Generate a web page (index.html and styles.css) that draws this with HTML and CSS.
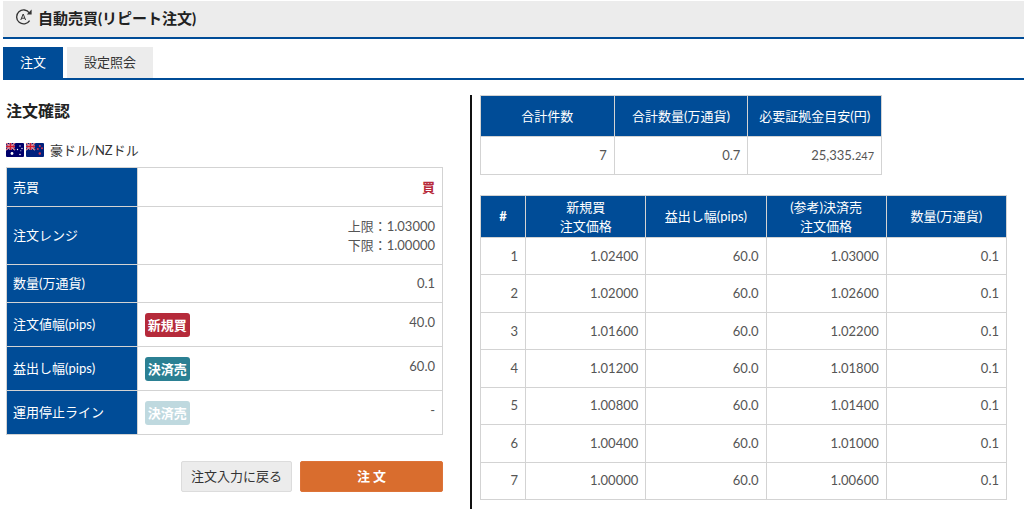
FILE: index.html
```html
<!DOCTYPE html>
<html lang="ja">
<head>
<meta charset="utf-8">
<meta name="viewport" content="width=device-width, initial-scale=1">
<title>自動売買(リピート注文)</title>
<link rel="stylesheet" href="styles.css">
</head>
<body>
<header class="page-header">
  <svg class="header-icon" viewBox="0 0 18 18" aria-hidden="true">
    <path d="M14.4 5A7 7 0 1 0 14.6 12.6" fill="none" stroke="currentColor" stroke-width="1.3"/>
    <path d="M16.6 1.6V6.4H11.8Z" fill="currentColor"/>
    <path d="M5.8 12 8.2 6 10.6 12M6.6 10.2H9.8" fill="none" stroke="currentColor" stroke-width="1"/>
  </svg>
  <h1 class="page-title">自動売買(リピート注文)</h1>
</header>
<nav class="tabs">
  <button type="button" class="tab tab-active">注文</button>
  <button type="button" class="tab">設定照会</button>
</nav>
<main class="content">
  <section class="confirm">
    <h2 class="section-title">注文確認</h2>
    <p class="pair">
      <svg class="flag" viewBox="0 0 18 14" aria-hidden="true">
        <rect width="18" height="14" rx="1" fill="#00006b"/>
        <path d="M0 0 9 7M9 0 0 7" stroke="#fff" stroke-width="1.2"/>
        <path d="M0 0 9 7M9 0 0 7" stroke="#d22" stroke-width="0.8"/>
        <path d="M4.5 0V7M0 3.5H9" stroke="#f3c9d4" stroke-width="2.2"/>
        <path d="M4.5 0V7M0 3.5H9" stroke="#d51a2c" stroke-width="1.5"/>
        <g fill="#fff"><circle cx="6" cy="10.5" r="1.4"/><circle cx="14" cy="3" r=".7"/><circle cx="11.5" cy="6.5" r=".7"/><circle cx="16" cy="5.5" r=".7"/><circle cx="14" cy="11.5" r=".8"/><circle cx="14.8" cy="7.8" r=".5"/></g>
      </svg>
      <svg class="flag" viewBox="0 0 18 14" aria-hidden="true">
        <rect width="18" height="14" rx="1" fill="#00207d"/>
        <path d="M0 0 9 7M9 0 0 7" stroke="#fff" stroke-width="1.2"/>
        <path d="M0 0 9 7M9 0 0 7" stroke="#d22" stroke-width="0.8"/>
        <path d="M4.5 0V7M0 3.5H9" stroke="#f3c9d4" stroke-width="2.2"/>
        <path d="M4.5 0V7M0 3.5H9" stroke="#d51a2c" stroke-width="1.5"/>
        <g fill="#d8354c"><circle cx="13.8" cy="3" r="1"/><circle cx="11.8" cy="6" r="1"/><circle cx="16" cy="5.3" r="1"/><circle cx="13.8" cy="10.5" r="1.2"/></g>
      </svg>
      <span class="pair-name">豪ドル/NZドル</span>
    </p>
    <table class="grid order">
      <colgroup><col class="col-label"><col class="col-badge"><col></colgroup>
      <tbody>
        <tr class="row-first"><th scope="row">売買</th><td colspan="2" class="buy">買</td></tr>
        <tr class="row-range"><th scope="row">注文レンジ</th><td colspan="2">上限：1.03000<br>下限：1.00000</td></tr>
        <tr class="row-short"><th scope="row">数量(万通貨)</th><td colspan="2">0.1</td></tr>
        <tr class="row-tall"><th scope="row">注文値幅(pips)</th><td class="badge-cell"><span class="badge badge-buy">新規買</span></td><td class="value">40.0</td></tr>
        <tr class="row-tall"><th scope="row">益出し幅(pips)</th><td class="badge-cell"><span class="badge badge-sell">決済売</span></td><td class="value">60.0</td></tr>
        <tr class="row-tall"><th scope="row">運用停止ライン</th><td class="badge-cell"><span class="badge badge-off">決済売</span></td><td class="value">-</td></tr>
      </tbody>
    </table>
    <div class="actions">
      <button type="button" class="btn btn-back">注文入力に戻る</button>
      <button type="button" class="btn btn-order">注 文</button>
    </div>
  </section>
  <section class="details">
    <table class="grid summary">
      <thead><tr><th scope="col">合計件数</th><th scope="col">合計数量(万通貨)</th><th scope="col">必要証拠金目安(円)</th></tr></thead>
      <tbody><tr><td>7</td><td>0.7</td><td>25,335.<small class="decimals">247</small></td></tr></tbody>
    </table>
    <table class="grid lines">
      <colgroup><col class="col-no"><col><col><col><col></colgroup>
      <thead><tr><th scope="col" class="no">#</th><th scope="col">新規買<br>注文価格</th><th scope="col">益出し幅(pips)</th><th scope="col">(参考)決済売<br>注文価格</th><th scope="col">数量(万通貨)</th></tr></thead>
      <tbody>
        <tr><td>1</td><td>1.02400</td><td>60.0</td><td>1.03000</td><td>0.1</td></tr>
        <tr><td>2</td><td>1.02000</td><td>60.0</td><td>1.02600</td><td>0.1</td></tr>
        <tr><td>3</td><td>1.01600</td><td>60.0</td><td>1.02200</td><td>0.1</td></tr>
        <tr><td>4</td><td>1.01200</td><td>60.0</td><td>1.01800</td><td>0.1</td></tr>
        <tr><td>5</td><td>1.00800</td><td>60.0</td><td>1.01400</td><td>0.1</td></tr>
        <tr><td>6</td><td>1.00400</td><td>60.0</td><td>1.01000</td><td>0.1</td></tr>
        <tr><td>7</td><td>1.00000</td><td>60.0</td><td>1.00600</td><td>0.1</td></tr>
      </tbody>
    </table>
  </section>
</main>
</body>
</html>
```
FILE: styles.css
```css
:root {
  --blue: #004c97;
  --line: #d3d3d3;
  --gray: #ececec;
}

* {
  box-sizing: border-box;
}

body {
  margin: 0;
  min-height: 100vh;
  display: flex;
  flex-direction: column;
  background: #fff;
  color: #333;
  font-family: Lato, "Noto Sans CJK JP", sans-serif;
  font-size: 13px;
  line-height: 19px;
}

.page-header {
  display: flex;
  align-items: center;
  gap: 5px;
  height: 38px;
  margin: 1px 0 0 3px;
  padding-left: 12px;
  background: var(--gray);
  border-bottom: 2px solid var(--blue);
}

.header-icon {
  width: 18px;
  height: 18px;
  margin-bottom: 4px;
}

.page-title {
  margin: 0 0 2px;
  font-size: 15px;
  font-weight: 700;
  color: #222;
}

.tabs {
  display: flex;
  gap: 4px;
  margin: 8px 0 0 3px;
  border-bottom: 2px solid var(--blue);
}

.tab {
  height: 31px;
  padding: 0 17px;
  border: 0;
  background: var(--gray);
  color: #333;
  font: inherit;
}

.tab-active {
  background: var(--blue);
  color: #fff;
}

.content {
  flex: 1;
  display: flex;
  padding-top: 15px;
}

.confirm {
  width: 46%;
  padding: 0 28px 0 6px;
}

.section-title {
  margin: 6px 0 19px;
  font-size: 16px;
  font-weight: 700;
  line-height: 20px;
  color: #222;
}

.pair {
  display: flex;
  align-items: center;
  gap: 2px;
  margin: 0 0 7px;
  line-height: 20px;
}

.flag {
  width: 18px;
  height: 14px;
}

.pair-name {
  margin-left: 4px;
}

.grid {
  border-collapse: collapse;
  table-layout: fixed;
  width: 100%;
}

.grid th,
.grid td {
  padding: 0 7px;
  border: 1px solid var(--line);
}

.grid th {
  background: var(--blue);
  color: #fff;
  font-weight: 400;
}

.grid td {
  color: #555;
  text-align: right;
}

.order th {
  padding-left: 6px;
  text-align: left;
}

.col-label {
  width: 30%;
}

.col-badge {
  width: 60px;
}

.row-first {
  height: 39px;
}

.row-short {
  height: 38px;
}

.row-range {
  height: 58px;
}

.row-tall {
  height: 44px;
}

.order .buy {
  color: #b72a3a;
  font-weight: 700;
}

.order .badge-cell {
  border-right: 0;
  text-align: left;
}

.order .value {
  padding-bottom: 4px;
  border-left: 0;
}

.badge {
  display: inline-block;
  padding: 0 3px;
  border-radius: 3px;
  color: #fff;
  font-weight: 700;
  line-height: 24px;
}

.badge-buy {
  background: #b52a3a;
}

.badge-sell {
  background: #2b8093;
}

.badge-off {
  background: #bfd9df;
}

.actions {
  display: flex;
  justify-content: flex-end;
  gap: 8px;
  margin-top: 26px;
}

.btn {
  height: 31px;
  padding: 0 9px;
  border: 1px solid #dcdcdc;
  border-radius: 2px;
  background: var(--gray);
  color: #333;
  font: inherit;
}

.btn-order {
  width: 143px;
  border-color: #dd7338;
  background: #d96d2e;
  color: #fff;
  font-weight: 700;
}

.details {
  flex: 1;
  margin-left: -1px;
  padding: 0 17px 0 8px;
  border-left: 2px solid #111;
}

.summary {
  width: 402px;
  max-width: 100%;
  margin-bottom: 20px;
}

.summary th {
  height: 41px;
}

.summary td {
  height: 38px;
}

.decimals {
  font-size: 11px;
}

.col-no {
  width: 45px;
}

.lines {
  height: 305px;
}

.lines thead th {
  height: 42px;
  padding: 0 2px;
}

.lines thead .no {
  font-weight: 700;
}
```
